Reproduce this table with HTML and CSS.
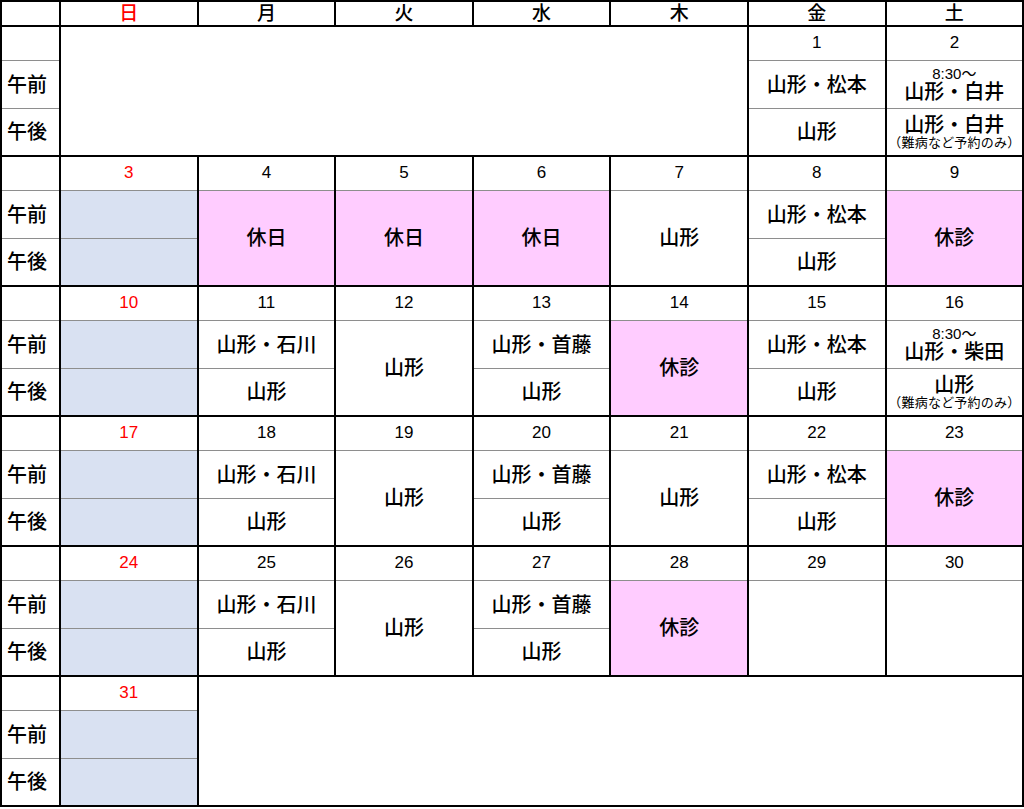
FILE: index.html
```html
<!DOCTYPE html>
<html lang="ja">
<head>
<meta charset="utf-8">
<title>診療カレンダー</title>
<link rel="stylesheet" href="styles.css">
</head>
<body>
<table class="cal">
  <colgroup>
    <col class="c-label">
    <col class="c-day"><col class="c-day"><col class="c-day"><col class="c-day"><col class="c-day"><col class="c-day"><col class="c-day">
  </colgroup>
  <thead>
    <tr class="r-head">
      <th></th>
      <th class="sun">日</th><th>月</th><th>火</th><th>水</th><th>木</th><th>金</th><th>土</th>
    </tr>
  </thead>
  <tbody>
    <!-- week 1 -->
    <tr class="r-date">
      <td class="lab"></td>
      <td class="blank" colspan="5" rowspan="3"></td>
      <td class="date">1</td>
      <td class="date">2</td>
    </tr>
    <tr class="r-am">
      <td class="lab">午前</td>
      <td>山形・松本</td>
      <td class="two"><span class="time">8:30～</span><span>山形・白井</span></td>
    </tr>
    <tr class="r-pm">
      <td class="lab">午後</td>
      <td>山形</td>
      <td class="two"><span>山形・白井</span><span class="note">（難病など予約のみ）</span></td>
    </tr>

    <!-- week 2 -->
    <tr class="r-date">
      <td class="lab"></td>
      <td class="date sun">3</td><td class="date">4</td><td class="date">5</td><td class="date">6</td><td class="date">7</td><td class="date">8</td><td class="date">9</td>
    </tr>
    <tr class="r-am">
      <td class="lab">午前</td>
      <td class="off"></td>
      <td class="hol" rowspan="2">休日</td>
      <td class="hol" rowspan="2">休日</td>
      <td class="hol" rowspan="2">休日</td>
      <td rowspan="2">山形</td>
      <td>山形・松本</td>
      <td class="hol" rowspan="2">休診</td>
    </tr>
    <tr class="r-pm">
      <td class="lab">午後</td>
      <td class="off"></td>
      <td>山形</td>
    </tr>

    <!-- week 3 -->
    <tr class="r-date">
      <td class="lab"></td>
      <td class="date sun">10</td><td class="date">11</td><td class="date">12</td><td class="date">13</td><td class="date">14</td><td class="date">15</td><td class="date">16</td>
    </tr>
    <tr class="r-am">
      <td class="lab">午前</td>
      <td class="off"></td>
      <td>山形・石川</td>
      <td rowspan="2">山形</td>
      <td>山形・首藤</td>
      <td class="hol" rowspan="2">休診</td>
      <td>山形・松本</td>
      <td class="two"><span class="time">8:30～</span><span>山形・柴田</span></td>
    </tr>
    <tr class="r-pm">
      <td class="lab">午後</td>
      <td class="off"></td>
      <td>山形</td>
      <td>山形</td>
      <td>山形</td>
      <td class="two"><span>山形</span><span class="note">（難病など予約のみ）</span></td>
    </tr>

    <!-- week 4 -->
    <tr class="r-date">
      <td class="lab"></td>
      <td class="date sun">17</td><td class="date">18</td><td class="date">19</td><td class="date">20</td><td class="date">21</td><td class="date">22</td><td class="date">23</td>
    </tr>
    <tr class="r-am">
      <td class="lab">午前</td>
      <td class="off"></td>
      <td>山形・石川</td>
      <td rowspan="2">山形</td>
      <td>山形・首藤</td>
      <td rowspan="2">山形</td>
      <td>山形・松本</td>
      <td class="hol" rowspan="2">休診</td>
    </tr>
    <tr class="r-pm">
      <td class="lab">午後</td>
      <td class="off"></td>
      <td>山形</td>
      <td>山形</td>
      <td>山形</td>
    </tr>

    <!-- week 5 -->
    <tr class="r-date">
      <td class="lab"></td>
      <td class="date sun">24</td><td class="date">25</td><td class="date">26</td><td class="date">27</td><td class="date">28</td><td class="date">29</td><td class="date">30</td>
    </tr>
    <tr class="r-am">
      <td class="lab">午前</td>
      <td class="off"></td>
      <td>山形・石川</td>
      <td rowspan="2">山形</td>
      <td>山形・首藤</td>
      <td class="hol" rowspan="2">休診</td>
      <td rowspan="2"></td>
      <td rowspan="2"></td>
    </tr>
    <tr class="r-pm">
      <td class="lab">午後</td>
      <td class="off"></td>
      <td>山形</td>
      <td>山形</td>
    </tr>

    <!-- week 6 -->
    <tr class="r-date">
      <td class="lab"></td>
      <td class="date sun">31</td>
      <td class="blank" colspan="6" rowspan="3"></td>
    </tr>
    <tr class="r-am">
      <td class="lab">午前</td>
      <td class="off"></td>
    </tr>
    <tr class="r-pm">
      <td class="lab">午後</td>
      <td class="off"></td>
    </tr>
  </tbody>
</table>
</body>
</html>
```

FILE: styles.css
```css
html, body {
  margin: 0;
  padding: 0;
  background: #fff;
}

.cal {
  border-collapse: collapse;
  table-layout: fixed;
  width: 1022px;
  font-family: "Liberation Sans", "Noto Sans CJK JP", sans-serif;
  color: #000;
  border: 2px solid #000;
}

.c-label { width: 59px; }
.c-day { width: 137.6px; }

.cal th,
.cal td {
  border-left: 2px solid #000;
  border-right: 2px solid #000;
  padding: 0;
  text-align: center;
  vertical-align: middle;
  font-size: 20px;
  font-weight: 500;
  line-height: 1.1;
  white-space: nowrap;
}

.r-head th {
  height: 23px;
  font-size: 19px;
  font-weight: 500;
  border-bottom: 2px solid #000;
  line-height: 1;
}

.r-date td {
  height: 33px;
  border-top: 2px solid #000;
  border-bottom: 1px solid #8e8e8e;
  font-size: 17px;
  font-weight: 400;
}

.r-am td {
  height: 47px;
  border-bottom: 1px solid #8e8e8e;
}

.r-pm td {
  height: 46px;
  border-bottom: 2px solid #000;
}

.cal td.lab {
  font-size: 20px;
  text-align: left;
  padding-left: 5px;
}

.cal td.blank {
  border-bottom: 2px solid #000;
  border-top: 2px solid #000;
}

.sun {
  color: #ff0000;
}

.cal td.off {
  background: #d9e1f2;
}

.cal td.hol {
  background: #ffccff;
  border-bottom: 2px solid #000;
}

.cal td.two span {
  display: block;
}

.cal td.two .time {
  font-size: 15px;
  font-weight: 400;
  line-height: 1.05;
}

.cal td.two .note {
  font-size: 13px;
  letter-spacing: 0.2px;
  font-weight: 400;
  line-height: 1.15;
}
```
